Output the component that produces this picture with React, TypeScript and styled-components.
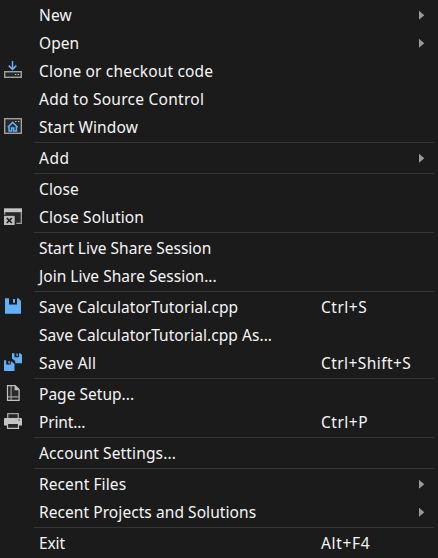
import React, { Fragment } from 'react';
import styled, { createGlobalStyle } from 'styled-components';

const GlobalStyle = createGlobalStyle`
  body { margin: 0; background: #1b1b1b; overflow: hidden; }
`;

const Menu = styled.div`
  box-sizing: border-box;
  width: 438px;
  height: 558px;
  padding: 1px 4px 0;
  background: #1b1b1b;
  color: #f5f5f5;
  font: 15.5px/28px 'Noto Sans', 'Noto Sans CJK SC', sans-serif;
  white-space: nowrap;
`;

const Item = styled.div`
  display: grid;
  grid-template-columns: 35px 282px 98px 1fr;
  align-items: center;
  height: 28px;
`;

const Label = styled.span<{ $tracking: number }>`
  letter-spacing: ${(p) => p.$tracking}px;
`;

const Separator = styled.div`
  height: 1px;
  margin: 1px 0 1px 30px;
  background: #363636;
`;

const Glyph = styled.svg`
  display: block;
  width: 18px;
  height: 20px;
`;

const Chevron = styled.svg`
  display: block;
  width: 6px;
  height: 10px;
  fill: #9a9a9a;
`;

const BLUE = '#62b0f8';
const GRAY = '#a0a0a0';

const CloneIcon = () => (
  <Glyph viewBox="0 0 18 20" fill="none">
    <path d="M8.5 0V8.3M4.7 4.6l3.8 3.8 3.8-3.8" stroke={BLUE} strokeWidth="1.5" />
    <rect x="0.7" y="10.7" width="16.6" height="5.6" fill="#282828" stroke={GRAY} strokeWidth="1.4" />
    <path d="M11 13.5h1.3M13.7 13.5h1.3" stroke="#c8c8c8" strokeWidth="1" />
  </Glyph>
);

const WindowIcon = () => (
  <Glyph viewBox="0 0 18 20" fill="none">
    <rect x="0.7" y="1.7" width="16.6" height="14.6" fill="#292929" stroke={GRAY} strokeWidth="1.4" />
    <path d="M11.2 4.5h1.3M14 4.5h1.3" stroke="#c8c8c8" strokeWidth="1" />
    <path d="M5 9.5V14h2.7v-3h2v3h2.8V9.5" fill="#244866" stroke={BLUE} strokeWidth="1.4" />
    <path d="M3.8 10.2l4.9-4.8 4.9 4.8" stroke={BLUE} strokeWidth="1.5" />
  </Glyph>
);

const CloseSolutionIcon = () => (
  <Glyph viewBox="0 0 18 20" fill="none">
    <rect x="0.5" y="3" width="17" height="13.5" fill="#282828" />
    <path d="M0 1.3h18v3.9H0z" fill="#c5c5c5" />
    <path d="M0.6 5v2.7M17.3 5v11.4h-5" stroke={GRAY} strokeWidth="1.3" />
    <path d="M0 8.2h11.4V19H0z" fill="#1b1b1b" />
    <path d="M0 8.8h10.7v9.2H0z" fill="#bcbcbc" />
    <path d="M2.8 11l5 5M7.8 11l-5 5" stroke="#1b1b1b" strokeWidth="1.7" />
  </Glyph>
);

const SaveIcon = () => (
  <Glyph viewBox="0 0 18 20" fill={BLUE}>
    <path d="M1 1.2h4v6.3h8V1.2h1.5L17 4v12.8H1z" />
    <path d="M9 2h2v3.8H9z" />
  </Glyph>
);

const SaveAllIcon = () => (
  <Glyph viewBox="0 0 18 20" fill={BLUE}>
    <path d="M8 0.3h2.5v3.9h4.5V0.3h1.3L18 2v8.3h-6.8V8L8 5.4z" />
    <path d="M12.4 0.6h1.4v2.5h-1.4z" />
    <path d="M0 7.3h2.2v4.2h4.6V8.6h0.7l3 2.5V18H0z" />
    <path d="M4.4 7.9h1.4v2.6H4.4z" />
  </Glyph>
);

const PageIcon = () => (
  <Glyph viewBox="0 0 18 20" fill="none">
    <path d="M3.5 1.7h7.7l3.9 3.9v10.7H3.5z" fill="#292929" stroke="#c2c2c2" strokeWidth="1.2" />
    <path d="M10.6 1.5v4.8h4.8z" fill="#c2c2c2" />
    <path d="M7.1 2v14M4 12.9h11" stroke={GRAY} strokeWidth="1.1" />
  </Glyph>
);

const PrintIcon = () => (
  <Glyph viewBox="0 0 18 20" fill="none">
    <path d="M3.7 6.5V1.7h10.6v4.8" fill="#292929" stroke={GRAY} strokeWidth="1.3" />
    <path d="M0 7q0-1 1-1h16q1 0 1 1v6.5h-3V11H3v2.5H0z" fill="#c5c5c5" />
    <path d="M3.5 11.5h11v4.8h-11z" fill="#292929" stroke="#c5c5c5" strokeWidth="1.2" />
    <path d="M14.3 8h1.5" stroke="#333" strokeWidth="1" />
  </Glyph>
);

interface Entry {
  label: string;
  tracking: number;
  icon?: React.FC;
  keys?: string;
  keyTracking?: number;
  submenu?: boolean;
}

const groups: Entry[][] = [
  [
    { label: 'New', tracking: 0.1, submenu: true },
    { label: 'Open', tracking: 0.05, submenu: true },
    { label: 'Clone or checkout code', tracking: 0.17, icon: CloneIcon },
    { label: 'Add to Source Control', tracking: 0.27 },
    { label: 'Start Window', tracking: 0.11, icon: WindowIcon },
  ],
  [{ label: 'Add', tracking: 0.5, submenu: true }],
  [
    { label: 'Close', tracking: 0.12 },
    { label: 'Close Solution', tracking: 0.12, icon: CloseSolutionIcon },
  ],
  [
    { label: 'Start Live Share Session', tracking: 0 },
    { label: 'Join Live Share Session...', tracking: 0.02 },
  ],
  [
    { label: 'Save CalculatorTutorial.cpp', tracking: 0.06, icon: SaveIcon, keys: 'Ctrl+S', keyTracking: 0.5 },
    { label: 'Save CalculatorTutorial.cpp As...', tracking: 0.05 },
    { label: 'Save All', tracking: 0.17, icon: SaveAllIcon, keys: 'Ctrl+Shift+S', keyTracking: 0.43 },
  ],
  [
    { label: 'Page Setup...', tracking: 0.02, icon: PageIcon },
    { label: 'Print...', tracking: -0.15, icon: PrintIcon, keys: 'Ctrl+P', keyTracking: 0.5 },
  ],
  [{ label: 'Account Settings...', tracking: 0.14 }],
  [
    { label: 'Recent Files', tracking: 0.1, submenu: true },
    { label: 'Recent Projects and Solutions', tracking: 0.07, submenu: true },
  ],
  [{ label: 'Exit', tracking: -0.1, keys: 'Alt+F4', keyTracking: 0.65 }],
];

export default function App() {
  return (
    <>
      <GlobalStyle />
      <Menu>
        {groups.map((entries, index) => (
          <Fragment key={index}>
            {index > 0 && <Separator />}
            {entries.map(({ label, tracking, icon: Icon, keys, keyTracking = 0, submenu }) => (
              <Item key={label}>
                <span>{Icon && <Icon />}</span>
                <Label $tracking={tracking}>{label}</Label>
                <Label $tracking={keyTracking}>{keys}</Label>
                {submenu && (
                  <Chevron viewBox="0 0 6 10">
                    <path d="M0 0.8L5.3 5.3 0 9.8z" />
                  </Chevron>
                )}
              </Item>
            ))}
          </Fragment>
        ))}
      </Menu>
    </>
  );
}
